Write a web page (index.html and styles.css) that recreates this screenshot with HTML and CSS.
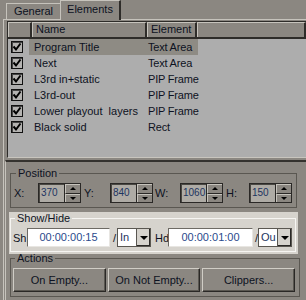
FILE: index.html
```html
<!DOCTYPE html>
<html>
<head>
<meta charset="utf-8">
<link rel="stylesheet" href="styles.css">
</head>
<body>
<div class="tabs">
  <div class="tab">General</div>
  <div class="tab active">Elements</div>
</div>
<div class="page">
  <div class="list">
    <div class="head">
      <div class="h c0"></div>
      <div class="h c1">Name</div>
      <div class="h c2">Element</div>
      <div class="h c3"></div>
    </div>
    <div class="row current">
      <div class="c0"><span class="chk"><svg width="10" height="10" viewBox="0 0 10 10"><polyline points="1.5,4.5 4,7.5 8.5,1.5" fill="none" stroke="#000" stroke-width="2"/></svg></span></div>
      <div class="c1">Program Title</div><div class="c2">Text Area</div><div class="c3"></div>
    </div>
    <div class="row">
      <div class="c0"><span class="chk"><svg width="10" height="10" viewBox="0 0 10 10"><polyline points="1.5,4.5 4,7.5 8.5,1.5" fill="none" stroke="#000" stroke-width="2"/></svg></span></div>
      <div class="c1">Next</div><div class="c2">Text Area</div><div class="c3"></div>
    </div>
    <div class="row">
      <div class="c0"><span class="chk"><svg width="10" height="10" viewBox="0 0 10 10"><polyline points="1.5,4.5 4,7.5 8.5,1.5" fill="none" stroke="#000" stroke-width="2"/></svg></span></div>
      <div class="c1">L3rd in+static</div><div class="c2">PIP Frame</div><div class="c3"></div>
    </div>
    <div class="row">
      <div class="c0"><span class="chk"><svg width="10" height="10" viewBox="0 0 10 10"><polyline points="1.5,4.5 4,7.5 8.5,1.5" fill="none" stroke="#000" stroke-width="2"/></svg></span></div>
      <div class="c1">L3rd-out</div><div class="c2">PIP Frame</div><div class="c3"></div>
    </div>
    <div class="row">
      <div class="c0"><span class="chk"><svg width="10" height="10" viewBox="0 0 10 10"><polyline points="1.5,4.5 4,7.5 8.5,1.5" fill="none" stroke="#000" stroke-width="2"/></svg></span></div>
      <div class="c1">Lower playout&nbsp; layers</div><div class="c2">PIP Frame</div><div class="c3"></div>
    </div>
    <div class="row">
      <div class="c0"><span class="chk"><svg width="10" height="10" viewBox="0 0 10 10"><polyline points="1.5,4.5 4,7.5 8.5,1.5" fill="none" stroke="#000" stroke-width="2"/></svg></span></div>
      <div class="c1">Black solid</div><div class="c2">Rect</div><div class="c3"></div>
    </div>
  </div>

  <div class="lower">
    <fieldset class="grp pos">
      <legend>Position</legend>
      <div class="prow">
        <span class="lbl lx">X:</span>
        <div class="spin"><span class="val">370</span><span class="btns"><span class="sb"><i class="up"></i></span><span class="sb"><i class="dn"></i></span></span></div>
        <span class="lbl ly">Y:</span>
        <div class="spin"><span class="val">840</span><span class="btns"><span class="sb"><i class="up"></i></span><span class="sb"><i class="dn"></i></span></span></div>
        <span class="lbl lw">W:</span>
        <div class="spin"><span class="val">1060</span><span class="btns"><span class="sb"><i class="up"></i></span><span class="sb"><i class="dn"></i></span></span></div>
        <span class="lbl lh">H:</span>
        <div class="spin"><span class="val">150</span><span class="btns"><span class="sb"><i class="up"></i></span><span class="sb"><i class="dn"></i></span></span></div>
      </div>
    </fieldset>

    <div class="light">
      <fieldset class="grp sh">
        <legend>Show/Hide</legend>
        <div class="srow">
          <span class="lbl lsh">Sh</span>
          <div class="tc tc1">00:00:00:15</div>
          <span class="lbl sl1">/</span>
          <div class="drop s1"><span class="st">In</span><span class="arr"><i class="dn"></i></span></div>
          <span class="lbl lhd">Hd</span>
          <div class="tc tc2">00:00:01:00</div>
          <span class="lbl sl2">/</span>
          <div class="drop s2"><span class="st">Ou</span><span class="arr"><i class="dn"></i></span></div>
        </div>
      </fieldset>
    </div>

    <fieldset class="grp act">
      <legend>Actions</legend>
      <div class="arow">
        <div class="btn">On Empty...</div>
        <div class="btn">On Not Empty...</div>
        <div class="btn">Clippers...</div>
      </div>
    </fieldset>
  </div>
</div>
</body>
</html>
```
FILE: styles.css
```css
* { box-sizing: border-box; }
html, body { margin: 0; padding: 0; }
body {
  width: 306px; height: 300px; overflow: hidden;
  background: #8b8781;
  font: 11px "Liberation Sans", Arial, sans-serif;
  color: #0d1222;
}
.tabs { display: flex; align-items: flex-end; height: 19px; padding-left: 6px; }
.tab {
  height: 16px; width: 54px;
  display: flex; align-items: center; justify-content: center;
  border-top: 1px solid #c6c3bc; border-left: 1px solid #c6c3bc;
  padding-bottom: 1px;
}
.tab.active {
  height: 20px; width: 61px; margin-bottom: -1px;
  position: relative; z-index: 1;
  background: #8b8781;
  border-right: 2px solid #2e2c29;
  padding-bottom: 3px;
}
.page {
  border-top: 1px solid #c6c3bc; border-left: 1px solid #c6c3bc;
  margin-left: 3px; height: 281px;
}
.list {
  margin: 1px 0 0 3px; height: 137px;
  background: #adadad;
  border-top: 1px solid #2e2c29; border-left: 1px solid #2e2c29;
  border-bottom: 1px solid #c8c5be;
}
.head { display: flex; height: 17px; border-bottom: 2px solid #2e2c29; background: #8b8781; }
.h {
  border-top: 1px solid #c6c3bc; border-left: 1px solid #c6c3bc;
  border-right: 2px solid #2e2c29;
  padding-left: 3px; line-height: 13px;
}
.c0 { width: 24px; flex: none; }
.c1 { width: 115px; flex: none; }
.c2 { width: 50px; flex: none; }
.c3 { flex: 1; }
.row { display: flex; height: 16px; align-items: center; background: #adadad; }
.row .c0 { padding-left: 3px; display: flex; align-items: center; }
.row .c1 { padding-left: 2px; line-height: 16px; }
.row .c2 { padding-left: 1px; line-height: 16px; white-space: nowrap; letter-spacing: -0.2px; }
.row .c3 { height: 16px; }
.row.current .c1, .row.current .c2 { background: #8e8b84; }
.row.current .c1 { margin-left: -3px; padding-left: 5px; width: 118px; }
.row.current .c2 { width: 51px; }
.chk {
  width: 12px; height: 12px; border: 1px solid #111;
  box-shadow: inset 1px 1px 0 #444;
  display: flex; align-items: center; justify-content: center;
  background: #b4b3b1;
}
.lower {
  margin: 2px 0 0 1px; height: 141px;
  border-top: 2px solid #34322e; border-left: 1px solid #c6c3bc;
}
.grp {
  margin: 0; padding: 0 3px 4px 3px;
  border: 1px solid #5a5751;
  min-width: 0;
}
.grp legend { padding: 0 2px; margin-left: 2px; line-height: 12px; height: 12px; }
.pos { margin: 5px 0 0 4px; width: 287px; }
.prow { display: flex; margin-top: 4px; height: 20px; align-items: center; }
.lbl { flex: none; }
.lx { width: 24px; }
.ly { width: 29px; padding-left: 3px; }
.lw { width: 27px; padding-left: 2px; }
.lh { width: 26px; padding-left: 3px; }
.spin {
  width: 43px; height: 20px; flex: none;
  display: flex;
  border: 1px solid #2a2826;
  box-shadow: inset 1px 1px 0 #4a4843;
  background: #aeaba5;
}
.val { flex: 1; padding: 0 0 0 2px; line-height: 18px; font-size: 10px; color: #1d3460; overflow: hidden; white-space: nowrap; }
.btns { width: 16px; flex: none; display: flex; flex-direction: column; border-left: 1px solid #2a2826; }
.sb {
  flex: 1; background: #8b8781;
  border-top: 1px solid #c6c3bc; border-left: 1px solid #c6c3bc;
  border-bottom: 1px solid #2a2826;
  display: flex; align-items: center; justify-content: center;
}
.sb:last-child { border-bottom: none; }
.up { width: 0; height: 0; border-left: 3px solid transparent; border-right: 3px solid transparent; border-bottom: 3px solid #000; }
.dn { width: 0; height: 0; border-left: 3px solid transparent; border-right: 3px solid transparent; border-top: 3px solid #000; }

.light {
  margin: 4px 0 0 3px; width: 289px; height: 42px;
  background: #d6d3cd;
}
.sh { margin: 0 0 0 1px; width: 286px; border-color: #f6f5f2; padding: 0 2px 4px 2px; }
.srow { display: flex; margin-top: 4px; height: 19px; align-items: center; }
.lsh { width: 14px; }
.tc {
  height: 19px; flex: none;
  background: #fff;
  border-top: 1px solid #6d6a64; border-left: 1px solid #6d6a64;
  border-right: 1px solid #e8e6e2; border-bottom: 1px solid #e8e6e2;
  text-align: center; line-height: 17px; color: #2a4a8c;
}
.tc1 { width: 83px; }
.tc2 { width: 85px; }
.sl1 { width: 7px; padding-left: 3px; }
.sl2 { width: 5px; padding-left: 2px; }
.lhd { width: 17px; padding-left: 4px; }
.drop {
  height: 19px; flex: none; display: flex;
  background: #fff;
  border: 1px solid #5a5751;
}
.s1 { width: 34px; }
.s2 { width: 34px; }
.st { flex: 1; padding-left: 2px; line-height: 17px; overflow: hidden; white-space: nowrap; color: #1d3460; }
.arr {
  width: 14px; background: #d6d3cd;
  border-left: 1px solid #5a5751;
  box-shadow: inset -1px -1px 0 #2a2826;
  display: flex; align-items: center; justify-content: center;
}
.arr .dn { border-left-width: 4px; border-right-width: 4px; border-top-width: 4px; }

.act { margin: -2px 0 0 4px; width: 290px; padding: 0 4px 4px 2px; }
.arow { display: flex; gap: 2px; margin-top: 4px; }
.btn {
  flex: 1; height: 24px;
  display: flex; align-items: center; justify-content: center;
  background: #8b8781;
  border: 1px solid; border-color: #d0cdc6 #2a2826 #2a2826 #d0cdc6;
  box-shadow: inset -1px -1px 0 #5a5751;
}
```
